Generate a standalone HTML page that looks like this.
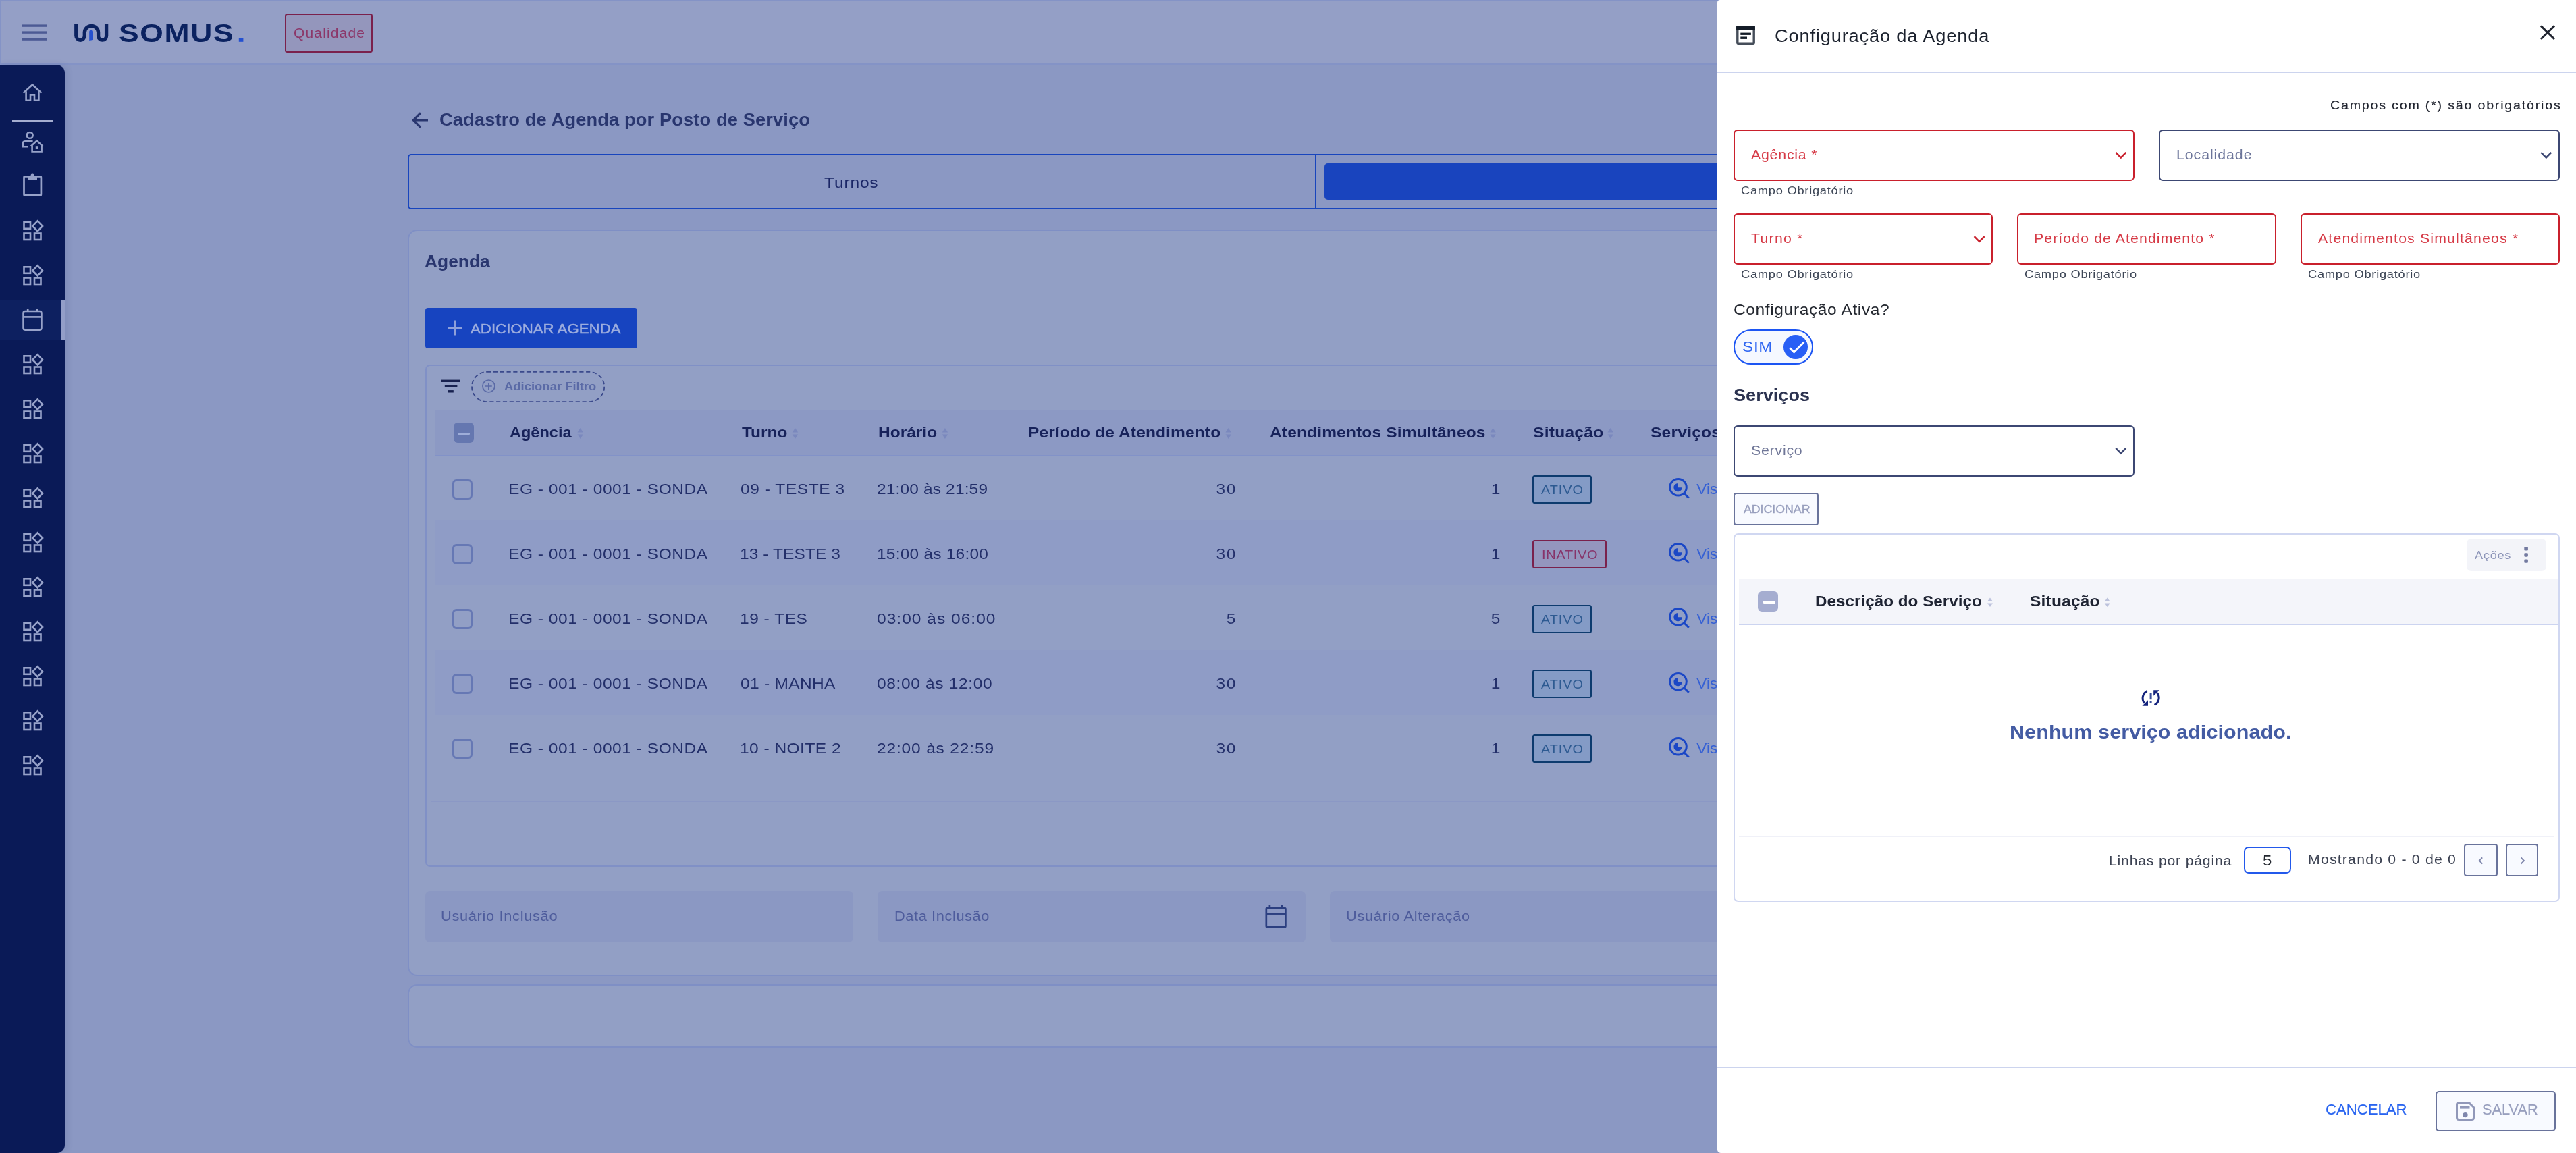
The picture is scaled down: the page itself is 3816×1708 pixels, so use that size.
<!DOCTYPE html>
<html lang="pt-BR">
<head>
<meta charset="utf-8">
<title>Cadastro de Agenda por Posto de Serviço</title>
<style>
*{box-sizing:border-box;margin:0;padding:0}
html,body{width:3816px;height:1708px;overflow:hidden;background:#8b98c3;font-family:'Liberation Sans',sans-serif}
#app{position:absolute;left:0;top:0;width:3816px;height:1708px;overflow:hidden;will-change:transform}
.a{position:absolute}
.t{position:absolute;white-space:pre;line-height:1;font-family:'Liberation Sans',sans-serif}
svg{position:absolute;overflow:visible}
/* main */
#header{left:0;top:0;width:3816px;height:96px;background:#949fc6;border:2px solid #8493c6}
#sidebar{left:0;top:96px;width:96px;height:1612px;background:#0a1a57;border-radius:0 12px 12px 0;box-shadow:4px 0 10px rgba(20,35,100,.10)}
#sideact{left:0;top:444px;width:96px;height:60px;background:#0d2060}
#sideind{left:90px;top:444px;width:6px;height:60px;background:#939ec8}
#sidesep{left:18px;top:178px;width:60px;height:2px;background:#a5aed0}
#badgeQ{left:422px;top:20px;width:130px;height:58px;border:2px solid #7a214c;border-radius:3.5px;background:#9496bc}
#tabs{left:604px;top:228px;width:2700px;height:82px;border:2px solid #1845bd;border-radius:5px}
#tabdiv{left:1948px;top:230px;width:2px;height:78px;background:#1845bd}
#tabact{left:1962px;top:242px;width:1300px;height:54px;background:#1944be;border-radius:5px}
#card1{left:604px;top:340px;width:2700px;height:1106px;background:#929fc5;border:2px solid #7f8fc5;border-radius:14px}
#card2{left:604px;top:1458px;width:2700px;height:94px;background:#929fc5;border:2px solid #7f8fc5;border-radius:14px}
#btnAdd{left:630px;top:456px;width:314px;height:60px;background:#1744c0;border-radius:4px}
#tbl{left:630px;top:540px;width:2600px;height:744px;border:2px solid #8090c6;border-radius:7px}
#thead{left:644px;top:608px;width:2500px;height:66px;background:#8c99c4}
#theadln{left:644px;top:674px;width:2500px;height:2px;background:#8292c8}
.stripe{left:644px;width:2500px;height:96px;background:#8f9cc6}
#tfootln{left:638px;top:1186px;width:2500px;height:2px;background:#8b98c5}
.cb{width:30px;height:30px;border:3px solid #6678b4;border-radius:6px}
#cbh{left:672px;top:626px;width:30px;height:30px;background:#6577b0;border-radius:6px}
#cbh i{position:absolute;left:6.3px;top:14.6px;width:17.4px;height:3.5px;background:#9eadd9;border-radius:1px}
.fld{top:1320px;width:634px;height:76px;background:#8b98c3;border-radius:7px}
.bdg{height:42px;border-radius:3.5px}
.bdA{border:2px solid #0d3b6e;background:#849bc6;width:88px}
.bdI{border:2px solid #7a214c;background:#9496be;width:110px}
/* drawer */
#drawer{left:2544px;top:0;width:1272px;height:1708px;background:#fff;border-radius:4px 0 0 5px}
.ln{background:#ccd4ee;height:2px}
.inp{height:76px;border-radius:6px;border:2px solid #c9202c;background:#fff}
.inpn{border-color:#3c4773}
#tog{left:2568px;top:488px;width:118px;height:52px;border:2px solid #1c55f3;border-radius:26px;background:#f5f8ff}
#togc{left:2642px;top:496px;width:36px;height:36px;border-radius:50%;background:#285ff5}
#btnAd2{left:2568px;top:730px;width:126px;height:48px;border:2px solid #69739b;border-radius:4px;background:#f8faff}
#sbox{left:2568px;top:790px;width:1224px;height:546px;border:2px solid #d0d7f1;border-radius:7px}
#acoes{left:3654px;top:798px;width:118px;height:48px;background:#f3f4f9;border-radius:7px}
#sth{left:2576px;top:858px;width:1214px;height:67px;background:#f4f5fa}
#sthln{left:2576px;top:924px;width:1214px;height:2px;background:#ccd4f0}
#cbs{left:2604px;top:876px;width:30px;height:30px;background:#a5add0;border-radius:6px}
#cbs i{position:absolute;left:8.3px;top:14.2px;width:17.6px;height:3.8px;background:#fff;border-radius:1px}
#sfootln{left:2576px;top:1238px;width:1208px;height:2px;background:#f0f1f8}
#pgsz{left:3324px;top:1254px;width:70px;height:40px;border:2px solid #2359eb;border-radius:7px}
.pgb{top:1250px;width:50px;height:48px;border:2px solid #69739b;border-radius:4px;background:#f8faff}
#btnSave{left:3608px;top:1616px;width:178px;height:60px;border:2px solid #69739b;border-radius:5px;background:#f8faff}
</style>
</head>
<body>
<div id="app">
<!-- ================= MAIN (under overlay) ================= -->
<header class="a" id="header"></header>
<div class="a" id="badgeQ"></div>
<nav class="a" id="sidebar"></nav>
<div class="a" id="sideact"></div><div class="a" id="sideind"></div><div class="a" id="sidesep"></div>
<div class="a" id="tabs"></div><div class="a" id="tabdiv"></div><div class="a" id="tabact"></div>
<div class="a" id="card1"></div><div class="a" id="card2"></div>
<div class="a" id="btnAdd"></div>
<div class="a" id="tbl"></div>
<div class="a" id="thead"></div><div class="a" id="theadln"></div>
<div class="a stripe" style="top:771px"></div><div class="a stripe" style="top:963px"></div>
<div class="a" id="tfootln"></div>
<div class="a" id="cbh"><i></i></div>
<div class="a cb" style="left:670px;top:710px"></div>
<div class="a cb" style="left:670px;top:806px"></div>
<div class="a cb" style="left:670px;top:902px"></div>
<div class="a cb" style="left:670px;top:998px"></div>
<div class="a cb" style="left:670px;top:1094px"></div>
<div class="a bdg bdA" style="left:2270px;top:704px"></div>
<div class="a bdg bdI" style="left:2270px;top:800px"></div>
<div class="a bdg bdA" style="left:2270px;top:896px"></div>
<div class="a bdg bdA" style="left:2270px;top:992px"></div>
<div class="a bdg bdA" style="left:2270px;top:1088px"></div>
<div class="a fld" style="left:630px"></div><div class="a fld" style="left:1300px"></div><div class="a fld" style="left:1970px"></div>
<svg style="left:0;top:0" width="2560" height="1708" viewBox="0 0 2560 1708"><g fill="#4c5a94"><rect x="32" y="36.4" width="37.5" height="3.4"/><rect x="32" y="46.4" width="37.5" height="3.4"/><rect x="32" y="56.4" width="37.5" height="3.4"/></g><path d="M112.8 35.4 V53 A6.25 6.25 0 0 0 125.3 53 V48 A10.15 9.6 0 0 1 145.6 48 V53.2 A6 6 0 0 0 157.6 53.2 V35.4" fill="none" stroke="#0b2260" stroke-width="5.3"/><path d="M132.2 60 V47.4 A2.9 2.9 0 0 1 138 47.4 V59 Z" fill="#2450d0"/><rect x="353.8" y="56.2" width="6.6" height="5.6" fill="#2450d0"/><g fill="none" stroke="#97a2c9" stroke-width="2.6" stroke-linejoin="miter"><path d="M34.6 137.8 L48 125.6 L61.4 137.8"/><path d="M38.6 135.2 V148.7 H45 V140.4 H51 V148.7 H57.4 V135.2"/><circle cx="44.2" cy="200.4" r="4.4"/><path d="M48.6 209.2 H37.6 Q33.7 209.2 33.7 213 V217.2 H41.8"/><path d="M45.8 216.6 L54.6 208.6 L63.4 216.6"/><path d="M47.6 215.4 V224.4 H61.6 V215.4"/></g><rect x="52.8" y="217.2" width="3.6" height="3.6" fill="#97a2c9"/><rect x="35.5" y="261.4" width="25.4" height="28" rx="1.5" fill="none" stroke="#97a2c9" stroke-width="2.7"/><path d="M41 261 H55 V266.4 H41 Z" fill="#97a2c9"/><rect x="45.6" y="257.6" width="4.8" height="5" rx="2" fill="#97a2c9"/><g fill="none" stroke="#97a2c9" stroke-width="2.6"><rect x="35.5" y="329.3" width="9.5" height="9.5"/><rect x="35.5" y="345.5" width="9.5" height="9.5"/><rect x="51" y="345.5" width="9.5" height="9.5"/><path d="M55.6 327.3 L63 334.9 L55.6 342.5 L48.2 334.9 Z"/></g><g fill="none" stroke="#97a2c9" stroke-width="2.6"><rect x="35.5" y="395.3" width="9.5" height="9.5"/><rect x="35.5" y="411.5" width="9.5" height="9.5"/><rect x="51" y="411.5" width="9.5" height="9.5"/><path d="M55.6 393.3 L63 400.9 L55.6 408.5 L48.2 400.9 Z"/></g><g fill="none" stroke="#97a2c9" stroke-width="2.6"><rect x="35.5" y="527.3" width="9.5" height="9.5"/><rect x="35.5" y="543.5" width="9.5" height="9.5"/><rect x="51" y="543.5" width="9.5" height="9.5"/><path d="M55.6 525.3 L63 532.9 L55.6 540.5 L48.2 532.9 Z"/></g><g fill="none" stroke="#97a2c9" stroke-width="2.6"><rect x="35.5" y="593.3" width="9.5" height="9.5"/><rect x="35.5" y="609.5" width="9.5" height="9.5"/><rect x="51" y="609.5" width="9.5" height="9.5"/><path d="M55.6 591.3 L63 598.9 L55.6 606.5 L48.2 598.9 Z"/></g><g fill="none" stroke="#97a2c9" stroke-width="2.6"><rect x="35.5" y="659.3" width="9.5" height="9.5"/><rect x="35.5" y="675.5" width="9.5" height="9.5"/><rect x="51" y="675.5" width="9.5" height="9.5"/><path d="M55.6 657.3 L63 664.9 L55.6 672.5 L48.2 664.9 Z"/></g><g fill="none" stroke="#97a2c9" stroke-width="2.6"><rect x="35.5" y="725.3" width="9.5" height="9.5"/><rect x="35.5" y="741.5" width="9.5" height="9.5"/><rect x="51" y="741.5" width="9.5" height="9.5"/><path d="M55.6 723.3 L63 730.9 L55.6 738.5 L48.2 730.9 Z"/></g><g fill="none" stroke="#97a2c9" stroke-width="2.6"><rect x="35.5" y="791.3" width="9.5" height="9.5"/><rect x="35.5" y="807.5" width="9.5" height="9.5"/><rect x="51" y="807.5" width="9.5" height="9.5"/><path d="M55.6 789.3 L63 796.9 L55.6 804.5 L48.2 796.9 Z"/></g><g fill="none" stroke="#97a2c9" stroke-width="2.6"><rect x="35.5" y="857.3" width="9.5" height="9.5"/><rect x="35.5" y="873.5" width="9.5" height="9.5"/><rect x="51" y="873.5" width="9.5" height="9.5"/><path d="M55.6 855.3 L63 862.9 L55.6 870.5 L48.2 862.9 Z"/></g><g fill="none" stroke="#97a2c9" stroke-width="2.6"><rect x="35.5" y="923.3" width="9.5" height="9.5"/><rect x="35.5" y="939.5" width="9.5" height="9.5"/><rect x="51" y="939.5" width="9.5" height="9.5"/><path d="M55.6 921.3 L63 928.9 L55.6 936.5 L48.2 928.9 Z"/></g><g fill="none" stroke="#97a2c9" stroke-width="2.6"><rect x="35.5" y="989.3" width="9.5" height="9.5"/><rect x="35.5" y="1005.5" width="9.5" height="9.5"/><rect x="51" y="1005.5" width="9.5" height="9.5"/><path d="M55.6 987.3 L63 994.9 L55.6 1002.5 L48.2 994.9 Z"/></g><g fill="none" stroke="#97a2c9" stroke-width="2.6"><rect x="35.5" y="1055.3" width="9.5" height="9.5"/><rect x="35.5" y="1071.5" width="9.5" height="9.5"/><rect x="51" y="1071.5" width="9.5" height="9.5"/><path d="M55.6 1053.3 L63 1060.9 L55.6 1068.5 L48.2 1060.9 Z"/></g><g fill="none" stroke="#97a2c9" stroke-width="2.6"><rect x="35.5" y="1121.3" width="9.5" height="9.5"/><rect x="35.5" y="1137.5" width="9.5" height="9.5"/><rect x="51" y="1137.5" width="9.5" height="9.5"/><path d="M55.6 1119.3 L63 1126.9 L55.6 1134.5 L48.2 1126.9 Z"/></g><g fill="none" stroke="#97a2c9" stroke-width="2.7"><rect x="34.6" y="461" width="26.8" height="27.6" rx="2.5"/><path d="M34.6 469.4 H61.4"/><path d="M41.2 457.6 V462"/><path d="M54.8 457.6 V462"/></g><path d="M634 178 H613.5 M623 167.4 L612.4 178 L623 188.6" fill="none" stroke="#29366f" stroke-width="3.2"/><path d="M663 485.6 H684.6 M673.8 474.6 V496.6" fill="none" stroke="#8ea0da" stroke-width="3"/><g fill="#17214f"><rect x="654" y="562.6" width="28" height="3.4"/><rect x="658.8" y="570.4" width="18.6" height="3.4"/><rect x="664" y="578.1" width="7.8" height="3.4"/></g><g fill="none" stroke="#5a6aa6" stroke-width="1.7"><circle cx="723.9" cy="572" r="9"/><path d="M719 572 H728.8 M723.9 567.1 V576.9"/></g><rect x="699" y="550.9" width="196.2" height="44.2" rx="22.1" fill="none" stroke="#3b4a8c" stroke-width="1.8" stroke-dasharray="6.2 3.6"/><path d="M855.5 640.4 L859.7 634 L863.9000000000001 640.4 Z M855.5 643.6 L859.7 650 L863.9000000000001 643.6 Z" fill="#7a88bd"/><path d="M1173.75 640.4 L1177.95 634 L1182.15 640.4 Z M1173.75 643.6 L1177.95 650 L1182.15 643.6 Z" fill="#7a88bd"/><path d="M1395.75 640.4 L1399.95 634 L1404.15 640.4 Z M1395.75 643.6 L1399.95 650 L1404.15 643.6 Z" fill="#7a88bd"/><path d="M1815.5 640.4 L1819.7 634 L1823.9 640.4 Z M1815.5 643.6 L1819.7 650 L1823.9 643.6 Z" fill="#7a88bd"/><path d="M2207.4 640.4 L2211.6 634 L2215.7999999999997 640.4 Z M2207.4 643.6 L2211.6 650 L2215.7999999999997 643.6 Z" fill="#7a88bd"/><path d="M2381.5 640.4 L2385.7 634 L2389.8999999999996 640.4 Z M2381.5 643.6 L2385.7 650 L2389.8999999999996 643.6 Z" fill="#7a88bd"/><g fill="none" stroke="#1a47c6" stroke-width="3"><circle cx="2486" cy="721.8" r="12.3"/><path d="M2495.2 731.1999999999999 L2501.7 737.6999999999999"/></g><path d="M2485.6 722.1999999999999 V716.0 A6.2 6.2 0 1 0 2491.8 722.1999999999999 Z" fill="#1a47c6"/><g fill="none" stroke="#1a47c6" stroke-width="3"><circle cx="2486" cy="817.8" r="12.3"/><path d="M2495.2 827.1999999999999 L2501.7 833.6999999999999"/></g><path d="M2485.6 818.1999999999999 V812.0 A6.2 6.2 0 1 0 2491.8 818.1999999999999 Z" fill="#1a47c6"/><g fill="none" stroke="#1a47c6" stroke-width="3"><circle cx="2486" cy="913.8" r="12.3"/><path d="M2495.2 923.1999999999999 L2501.7 929.6999999999999"/></g><path d="M2485.6 914.1999999999999 V908.0 A6.2 6.2 0 1 0 2491.8 914.1999999999999 Z" fill="#1a47c6"/><g fill="none" stroke="#1a47c6" stroke-width="3"><circle cx="2486" cy="1009.8" r="12.3"/><path d="M2495.2 1019.1999999999999 L2501.7 1025.7"/></g><path d="M2485.6 1010.1999999999999 V1004.0 A6.2 6.2 0 1 0 2491.8 1010.1999999999999 Z" fill="#1a47c6"/><g fill="none" stroke="#1a47c6" stroke-width="3"><circle cx="2486" cy="1105.8" r="12.3"/><path d="M2495.2 1115.2 L2501.7 1121.7"/></g><path d="M2485.6 1106.2 V1100.0 A6.2 6.2 0 1 0 2491.8 1106.2 Z" fill="#1a47c6"/><g fill="none" stroke="#2c3f80" stroke-width="2.7"><rect x="1875.8" y="1345.2" width="28.6" height="28" rx="1.5"/><path d="M1876 1353.6 H1904.4"/><path d="M1880.9 1340.6 V1346"/><path d="M1899 1340.6 V1346"/></g></svg>
<span class="t" id="t0" style="font-size:19.3px;font-weight:400;color:#8c3769;top:40.00px;left:434.74px;letter-spacing:1.044px;transform:scaleX(1.0900);transform-origin:0 0;">Qualidade</span>
<span class="t" id="t1" style="font-size:37px;font-weight:700;color:#0b2260;top:31.00px;left:176.22px;letter-spacing:1.421px;transform:scaleX(1.2000);transform-origin:0 0;">SOMUS</span>
<span class="t" id="t2" style="font-size:25px;font-weight:700;color:#29366f;top:165.00px;left:651.16px;letter-spacing:0.118px;transform:scaleX(1.0900);transform-origin:0 0;">Cadastro de Agenda por Posto de Serviço</span>
<span class="t" id="t3" style="font-size:22.5px;font-weight:400;color:#1a2666;top:260.00px;left:1221.33px;letter-spacing:0.773px;transform:scaleX(1.0900);transform-origin:0 0;">Turnos</span>
<span class="t" id="t4" style="font-size:25px;font-weight:700;color:#29366f;top:375.00px;left:629.16px;letter-spacing:0.000px;transform:scaleX(1.0554);transform-origin:0 0;">Agenda</span>
<span class="t" id="t5" style="font-size:21px;font-weight:400;color:#9dadde;top:476.00px;left:697.03px;letter-spacing:0.000px;transform:scaleX(1.0595);transform-origin:0 0;-webkit-text-stroke:0.45px #9dadde;">ADICIONAR AGENDA</span>
<span class="t" id="t6" style="font-size:17px;font-weight:700;color:#5a6aa6;top:564.00px;left:746.79px;letter-spacing:-0.000px;transform:scaleX(1.0852);transform-origin:0 0;">Adicionar Filtro</span>
<span class="t" id="t7" style="font-size:22.5px;font-weight:700;color:#17225a;top:630.00px;left:755.33px;letter-spacing:0.000px;transform:scaleX(1.0458);transform-origin:0 0;">Agência</span>
<span class="t" id="t8" style="font-size:22.5px;font-weight:700;color:#17225a;top:630.00px;left:1099.33px;letter-spacing:0.000px;transform:scaleX(1.0851);transform-origin:0 0;">Turno</span>
<span class="t" id="t9" style="font-size:22.5px;font-weight:700;color:#17225a;top:630.00px;left:1301.43px;letter-spacing:0.000px;transform:scaleX(1.0891);transform-origin:0 0;">Horário</span>
<span class="t" id="t10" style="font-size:22.5px;font-weight:700;color:#17225a;top:630.00px;left:1523.43px;letter-spacing:0.115px;transform:scaleX(1.0900);transform-origin:0 0;">Período de Atendimento</span>
<span class="t" id="t11" style="font-size:22.5px;font-weight:700;color:#17225a;top:630.00px;left:1880.97px;letter-spacing:0.134px;transform:scaleX(1.0900);transform-origin:0 0;">Atendimentos Simultâneos</span>
<span class="t" id="t12" style="font-size:22.5px;font-weight:700;color:#17225a;top:630.00px;left:2271.07px;letter-spacing:0.252px;transform:scaleX(1.0900);transform-origin:0 0;">Situação</span>
<span class="t" id="t13" style="font-size:22.5px;font-weight:700;color:#17225a;top:630.00px;left:2444.53px;letter-spacing:0.221px;transform:scaleX(1.0900);transform-origin:0 0;">Serviços</span>
<span class="t" id="t14" style="font-size:22.5px;font-weight:400;color:#232f6a;top:714.00px;left:752.73px;letter-spacing:0.485px;transform:scaleX(1.0900);transform-origin:0 0;">EG - 001 - 0001 - SONDA</span>
<span class="t" id="t15" style="font-size:22.5px;font-weight:400;color:#232f6a;top:714.00px;left:1096.53px;letter-spacing:0.502px;transform:scaleX(1.0900);transform-origin:0 0;">09 - TESTE 3</span>
<span class="t" id="t16" style="font-size:22.5px;font-weight:400;color:#232f6a;top:714.00px;left:1299.43px;letter-spacing:0.124px;transform:scaleX(1.0900);transform-origin:0 0;">21:00 às 21:59</span>
<span class="t" id="t17" style="font-size:22.5px;font-weight:400;color:#232f6a;top:714.00px;right:1984.20px;transform:scaleX(1.09);transform-origin:100% 0;letter-spacing:1.5px;">30</span>
<span class="t" id="t18" style="font-size:22.5px;font-weight:400;color:#232f6a;top:714.00px;right:1593.50px;transform:scaleX(1.09);transform-origin:100% 0;">1</span>
<span class="t" id="t19" style="font-size:18.3px;font-weight:400;color:#2d5a91;top:717.00px;left:2283.10px;letter-spacing:0.867px;transform:scaleX(1.0900);transform-origin:0 0;">ATIVO</span>
<span class="t" id="t20" style="font-size:22.5px;font-weight:400;color:#3560d4;top:714.00px;left:2513.25px;letter-spacing:0.107px;transform:scaleX(1.0000);transform-origin:0 0;">Visualizar</span>
<span class="t" id="t21" style="font-size:22.5px;font-weight:400;color:#232f6a;top:810.00px;left:752.73px;letter-spacing:0.485px;transform:scaleX(1.0900);transform-origin:0 0;">EG - 001 - 0001 - SONDA</span>
<span class="t" id="t22" style="font-size:22.5px;font-weight:400;color:#232f6a;top:810.00px;left:1095.73px;letter-spacing:0.069px;transform:scaleX(1.0900);transform-origin:0 0;">13 - TESTE 3</span>
<span class="t" id="t23" style="font-size:22.5px;font-weight:400;color:#232f6a;top:810.00px;left:1298.63px;letter-spacing:0.187px;transform:scaleX(1.0900);transform-origin:0 0;">15:00 às 16:00</span>
<span class="t" id="t24" style="font-size:22.5px;font-weight:400;color:#232f6a;top:810.00px;right:1984.20px;transform:scaleX(1.09);transform-origin:100% 0;letter-spacing:1.5px;">30</span>
<span class="t" id="t25" style="font-size:22.5px;font-weight:400;color:#232f6a;top:810.00px;right:1593.50px;transform:scaleX(1.09);transform-origin:100% 0;">1</span>
<span class="t" id="t26" style="font-size:18.3px;font-weight:400;color:#87346a;top:813.00px;left:2284.40px;letter-spacing:0.665px;transform:scaleX(1.0900);transform-origin:0 0;">INATIVO</span>
<span class="t" id="t27" style="font-size:22.5px;font-weight:400;color:#3560d4;top:810.00px;left:2513.25px;letter-spacing:0.107px;transform:scaleX(1.0000);transform-origin:0 0;">Visualizar</span>
<span class="t" id="t28" style="font-size:22.5px;font-weight:400;color:#232f6a;top:906.00px;left:752.73px;letter-spacing:0.485px;transform:scaleX(1.0900);transform-origin:0 0;">EG - 001 - 0001 - SONDA</span>
<span class="t" id="t29" style="font-size:22.5px;font-weight:400;color:#232f6a;top:906.00px;left:1095.73px;letter-spacing:0.461px;transform:scaleX(1.0900);transform-origin:0 0;">19 - TES</span>
<span class="t" id="t30" style="font-size:22.5px;font-weight:400;color:#232f6a;top:906.00px;left:1299.43px;letter-spacing:0.932px;transform:scaleX(1.0900);transform-origin:0 0;">03:00 às 06:00</span>
<span class="t" id="t31" style="font-size:22.5px;font-weight:400;color:#232f6a;top:906.00px;right:1984.20px;transform:scaleX(1.09);transform-origin:100% 0;letter-spacing:1.5px;">5</span>
<span class="t" id="t32" style="font-size:22.5px;font-weight:400;color:#232f6a;top:906.00px;right:1593.50px;transform:scaleX(1.09);transform-origin:100% 0;">5</span>
<span class="t" id="t33" style="font-size:18.3px;font-weight:400;color:#2d5a91;top:909.00px;left:2283.10px;letter-spacing:0.867px;transform:scaleX(1.0900);transform-origin:0 0;">ATIVO</span>
<span class="t" id="t34" style="font-size:22.5px;font-weight:400;color:#3560d4;top:906.00px;left:2513.25px;letter-spacing:0.107px;transform:scaleX(1.0000);transform-origin:0 0;">Visualizar</span>
<span class="t" id="t35" style="font-size:22.5px;font-weight:400;color:#232f6a;top:1002.00px;left:752.73px;letter-spacing:0.485px;transform:scaleX(1.0900);transform-origin:0 0;">EG - 001 - 0001 - SONDA</span>
<span class="t" id="t36" style="font-size:22.5px;font-weight:400;color:#232f6a;top:1002.00px;left:1096.53px;letter-spacing:0.275px;transform:scaleX(1.0900);transform-origin:0 0;">01 - MANHA</span>
<span class="t" id="t37" style="font-size:22.5px;font-weight:400;color:#232f6a;top:1002.00px;left:1299.43px;letter-spacing:0.592px;transform:scaleX(1.0900);transform-origin:0 0;">08:00 às 12:00</span>
<span class="t" id="t38" style="font-size:22.5px;font-weight:400;color:#232f6a;top:1002.00px;right:1984.20px;transform:scaleX(1.09);transform-origin:100% 0;letter-spacing:1.5px;">30</span>
<span class="t" id="t39" style="font-size:22.5px;font-weight:400;color:#232f6a;top:1002.00px;right:1593.50px;transform:scaleX(1.09);transform-origin:100% 0;">1</span>
<span class="t" id="t40" style="font-size:18.3px;font-weight:400;color:#2d5a91;top:1005.00px;left:2283.10px;letter-spacing:0.867px;transform:scaleX(1.0900);transform-origin:0 0;">ATIVO</span>
<span class="t" id="t41" style="font-size:22.5px;font-weight:400;color:#3560d4;top:1002.00px;left:2513.25px;letter-spacing:0.107px;transform:scaleX(1.0000);transform-origin:0 0;">Visualizar</span>
<span class="t" id="t42" style="font-size:22.5px;font-weight:400;color:#232f6a;top:1098.00px;left:752.73px;letter-spacing:0.485px;transform:scaleX(1.0900);transform-origin:0 0;">EG - 001 - 0001 - SONDA</span>
<span class="t" id="t43" style="font-size:22.5px;font-weight:400;color:#232f6a;top:1098.00px;left:1095.73px;letter-spacing:0.426px;transform:scaleX(1.0900);transform-origin:0 0;">10 - NOITE 2</span>
<span class="t" id="t44" style="font-size:22.5px;font-weight:400;color:#232f6a;top:1098.00px;left:1299.43px;letter-spacing:0.759px;transform:scaleX(1.0900);transform-origin:0 0;">22:00 às 22:59</span>
<span class="t" id="t45" style="font-size:22.5px;font-weight:400;color:#232f6a;top:1098.00px;right:1984.20px;transform:scaleX(1.09);transform-origin:100% 0;letter-spacing:1.5px;">30</span>
<span class="t" id="t46" style="font-size:22.5px;font-weight:400;color:#232f6a;top:1098.00px;right:1593.50px;transform:scaleX(1.09);transform-origin:100% 0;">1</span>
<span class="t" id="t47" style="font-size:18.3px;font-weight:400;color:#2d5a91;top:1101.00px;left:2283.10px;letter-spacing:0.867px;transform:scaleX(1.0900);transform-origin:0 0;">ATIVO</span>
<span class="t" id="t48" style="font-size:22.5px;font-weight:400;color:#3560d4;top:1098.00px;left:2513.25px;letter-spacing:0.107px;transform:scaleX(1.0000);transform-origin:0 0;">Visualizar</span>
<span class="t" id="t49" style="font-size:20px;font-weight:400;color:#4e5c9c;top:1347.00px;left:653.25px;letter-spacing:0.620px;transform:scaleX(1.0900);transform-origin:0 0;">Usuário Inclusão</span>
<span class="t" id="t50" style="font-size:20px;font-weight:400;color:#4e5c9c;top:1347.00px;left:1324.79px;letter-spacing:0.545px;transform:scaleX(1.0900);transform-origin:0 0;">Data Inclusão</span>
<span class="t" id="t51" style="font-size:20px;font-weight:400;color:#4e5c9c;top:1347.00px;left:1993.89px;letter-spacing:0.641px;transform:scaleX(1.0900);transform-origin:0 0;">Usuário Alteração</span>
<!-- ================= DRAWER ================= -->
<aside class="a" id="drawer"></aside>
<div class="a ln" style="left:2544px;top:106px;width:1272px"></div>
<div class="a ln" style="left:2544px;top:1580px;width:1272px"></div>
<div class="a inp" style="left:2568px;top:192px;width:594px"></div>
<div class="a inp inpn" style="left:3198px;top:192px;width:594px"></div>
<div class="a inp" style="left:2568px;top:316px;width:384px"></div>
<div class="a inp" style="left:2988px;top:316px;width:384px"></div>
<div class="a inp" style="left:3408px;top:316px;width:384px"></div>
<div class="a" id="tog"></div><div class="a" id="togc"></div>
<div class="a inp inpn" style="left:2568px;top:630px;width:594px"></div>
<div class="a" id="btnAd2"></div>
<div class="a" id="sbox"></div><div class="a" id="acoes"></div>
<div class="a" id="sth"></div><div class="a" id="sthln"></div><div class="a" id="cbs"><i></i></div>
<div class="a" id="sfootln"></div>
<div class="a" id="pgsz"></div>
<div class="a pgb" style="left:3650px"></div><div class="a pgb" style="left:3712px;width:48px"></div>
<div class="a" id="btnSave"></div>
<svg style="left:2544px;top:0" width="1272" height="1708" viewBox="2544 0 1272 1708"><g><rect x="2573.8" y="39.7" width="24.4" height="24.6" rx="1.2" fill="none" stroke="#454d59" stroke-width="3.4"/><rect x="2572.1" y="38" width="27.8" height="6" fill="#141c27"/><rect x="2578.3" y="48.6" width="15.6" height="3.3" fill="#141c27"/><rect x="2578.3" y="54.5" width="9.7" height="3.4" fill="#141c27"/></g><path d="M3764 38.4 L3784 58 M3784 38.4 L3764 58" fill="none" stroke="#20242f" stroke-width="3"/><path d="M3134.3 225.79999999999998 L3141.8 233.4 L3149.3 225.79999999999998" fill="none" stroke="#c9202c" stroke-width="2.5"/><path d="M3764.3 225.79999999999998 L3771.8 233.4 L3779.3 225.79999999999998" fill="none" stroke="#3c4773" stroke-width="2.5"/><path d="M2924.6 350.2 L2932.1 357.8 L2939.6 350.2" fill="none" stroke="#c9202c" stroke-width="2.5"/><path d="M3134.3 663.8000000000001 L3141.8 671.4 L3149.3 663.8000000000001" fill="none" stroke="#3c4773" stroke-width="2.5"/><path d="M2651.4 515.6 L2657.6 521.6 L2672.4 506.8" fill="none" stroke="#fff" stroke-width="2.9"/><g fill="#737aa0"><rect x="3739.3" y="810.2" width="5.6" height="5.4" rx="1.4"/><rect x="3739.3" y="819.3" width="5.6" height="5.4" rx="1.4"/><rect x="3739.3" y="828.4" width="5.6" height="5.4" rx="1.4"/></g><g fill="none" stroke="#14237d" stroke-width="3"><path d="M3180.6 1023.6 A12 12 0 0 0 3176.6 1041.6"/><path d="M3191.6 1044.4 A12 12 0 0 0 3195.6 1026.4"/></g><path d="M3173.4 1045.8 H3182 V1037.2 Z M3198.8 1022.2 H3190.2 V1030.8 Z" fill="#14237d"/><rect x="3184.6" y="1026.6" width="3" height="9.6" fill="#3b4f9b"/><rect x="3184.6" y="1038.8" width="3" height="3.2" fill="#3b4f9b"/><path d="M2944.0 891 L2948.0 885.6 L2952.0 891 Z M2944.0 893.6 L2948.0 899 L2952.0 893.6 Z" fill="#bcc2dc"/><path d="M3117.7 891 L3121.7 885.6 L3125.7 891 Z M3117.7 893.6 L3121.7 899 L3125.7 893.6 Z" fill="#bcc2dc"/><path d="M3677.2 1270.4 L3672.8 1275 L3677.2 1279.6" fill="none" stroke="#8088ad" stroke-width="1.9"/><path d="M3734.6 1270.4 L3739 1275 L3734.6 1279.6" fill="none" stroke="#8088ad" stroke-width="1.9"/><g><path d="M3642.5 1633.5 H3657.5 L3664.5 1640.5 V1655.5 Q3664.5 1658.5 3661.5 1658.5 H3642.5 Q3639.5 1658.5 3639.5 1655.5 V1636.5 Q3639.5 1633.5 3642.5 1633.5 Z" fill="none" stroke="#9198b9" stroke-width="3"/><rect x="3644" y="1638" width="14.5" height="4.6" fill="#9198b9"/><circle cx="3652" cy="1651.6" r="3.7" fill="#7f87ad"/></g></svg>
<span class="t" id="t52" style="font-size:25px;font-weight:400;color:#1c222e;top:41.00px;left:2629.16px;letter-spacing:0.756px;transform:scaleX(1.0900);transform-origin:0 0;">Configuração da Agenda</span>
<span class="t" id="t53" style="font-size:18px;font-weight:400;color:#20242f;top:147.00px;left:3451.90px;letter-spacing:1.650px;transform:scaleX(1.0900);transform-origin:0 0;-webkit-text-stroke:0.15px #20242f;">Campos com (*) são obrigatórios</span>
<span class="t" id="t54" style="font-size:19.5px;font-weight:400;color:#d63a46;top:220.00px;left:2594.42px;letter-spacing:0.746px;transform:scaleX(1.0900);transform-origin:0 0;">Agência *</span>
<span class="t" id="t55" style="font-size:19.5px;font-weight:400;color:#6b7499;top:220.00px;left:3223.80px;letter-spacing:0.880px;transform:scaleX(1.0900);transform-origin:0 0;">Localidade</span>
<span class="t" id="t56" style="font-size:16.8px;font-weight:400;color:#3d4656;top:275.00px;left:2578.90px;letter-spacing:0.674px;transform:scaleX(1.0900);transform-origin:0 0;">Campo Obrigatório</span>
<span class="t" id="t57" style="font-size:16.8px;font-weight:400;color:#3d4656;top:399.00px;left:2578.90px;letter-spacing:0.674px;transform:scaleX(1.0900);transform-origin:0 0;">Campo Obrigatório</span>
<span class="t" id="t58" style="font-size:16.8px;font-weight:400;color:#3d4656;top:399.00px;left:2998.90px;letter-spacing:0.674px;transform:scaleX(1.0900);transform-origin:0 0;">Campo Obrigatório</span>
<span class="t" id="t59" style="font-size:16.8px;font-weight:400;color:#3d4656;top:399.00px;left:3418.90px;letter-spacing:0.674px;transform:scaleX(1.0900);transform-origin:0 0;">Campo Obrigatório</span>
<span class="t" id="t60" style="font-size:19.5px;font-weight:400;color:#d63a46;top:344.00px;left:2594.42px;letter-spacing:1.174px;transform:scaleX(1.0900);transform-origin:0 0;">Turno *</span>
<span class="t" id="t61" style="font-size:19.5px;font-weight:400;color:#d63a46;top:344.00px;left:3013.44px;letter-spacing:1.007px;transform:scaleX(1.0900);transform-origin:0 0;">Período de Atendimento *</span>
<span class="t" id="t62" style="font-size:19.5px;font-weight:400;color:#d63a46;top:344.00px;left:3434.42px;letter-spacing:1.065px;transform:scaleX(1.0900);transform-origin:0 0;">Atendimentos Simultâneos *</span>
<span class="t" id="t63" style="font-size:22.5px;font-weight:400;color:#23272f;top:448.00px;left:2567.88px;letter-spacing:0.570px;transform:scaleX(1.0900);transform-origin:0 0;">Configuração Ativa?</span>
<span class="t" id="t64" style="font-size:22.2px;font-weight:400;color:#2f66f2;top:503.00px;left:2581.15px;letter-spacing:0.688px;transform:scaleX(1.0900);transform-origin:0 0;">SIM</span>
<span class="t" id="t65" style="font-size:25px;font-weight:700;color:#2c3350;top:573.00px;left:2567.71px;letter-spacing:0.000px;transform:scaleX(1.0851);transform-origin:0 0;">Serviços</span>
<span class="t" id="t66" style="font-size:19.5px;font-weight:400;color:#6f7697;top:658.00px;left:2593.62px;letter-spacing:0.729px;transform:scaleX(1.0900);transform-origin:0 0;">Serviço</span>
<span class="t" id="t67" style="font-size:16.8px;font-weight:400;color:#979ebd;top:747.00px;left:2582.60px;letter-spacing:0.000px;transform:scaleX(1.0563);transform-origin:0 0;-webkit-text-stroke:0.35px #979ebd;">ADICIONAR</span>
<span class="t" id="t68" style="font-size:16.8px;font-weight:400;color:#8c94b8;top:815.00px;left:3665.50px;letter-spacing:0.601px;transform:scaleX(1.0900);transform-origin:0 0;">Ações</span>
<span class="t" id="t69" style="font-size:22.5px;font-weight:700;color:#1f2433;top:880.00px;left:2688.53px;letter-spacing:0.000px;transform:scaleX(1.0783);transform-origin:0 0;">Descrição do Serviço</span>
<span class="t" id="t70" style="font-size:22.5px;font-weight:700;color:#1f2433;top:880.00px;left:3007.07px;letter-spacing:0.181px;transform:scaleX(1.0900);transform-origin:0 0;">Situação</span>
<span class="t" id="t71" style="font-size:28px;font-weight:700;color:#435ba3;top:1071.00px;left:2977.45px;letter-spacing:0.069px;transform:scaleX(1.0900);transform-origin:0 0;">Nenhum serviço adicionado.</span>
<span class="t" id="t72" style="font-size:19.5px;font-weight:400;color:#3c4252;top:1266.00px;left:3124.08px;letter-spacing:0.706px;transform:scaleX(1.0900);transform-origin:0 0;">Linhas por página</span>
<span class="t" id="t73" style="font-size:22px;font-weight:400;color:#23272f;top:1264.00px;left:3352.18px;letter-spacing:0.000px;transform:scaleX(1.0900);transform-origin:0 0;">5</span>
<span class="t" id="t74" style="font-size:19.5px;font-weight:400;color:#3c4252;top:1264.00px;left:3418.62px;letter-spacing:1.097px;transform:scaleX(1.0900);transform-origin:0 0;">Mostrando 0 - 0 de 0</span>
<span class="t" id="t75" style="font-size:22px;font-weight:400;color:#2864f0;top:1633.00px;left:3444.56px;letter-spacing:0.000px;transform:scaleX(1.0052);transform-origin:0 0;-webkit-text-stroke:0.2px #2864f0;">CANCELAR</span>
<span class="t" id="t76" style="font-size:22px;font-weight:400;color:#989fbe;top:1633.00px;left:3676.56px;letter-spacing:0.000px;transform:scaleX(0.9899);transform-origin:0 0;-webkit-text-stroke:0.2px #989fbe;">SALVAR</span>
</div>
</body>
</html>
